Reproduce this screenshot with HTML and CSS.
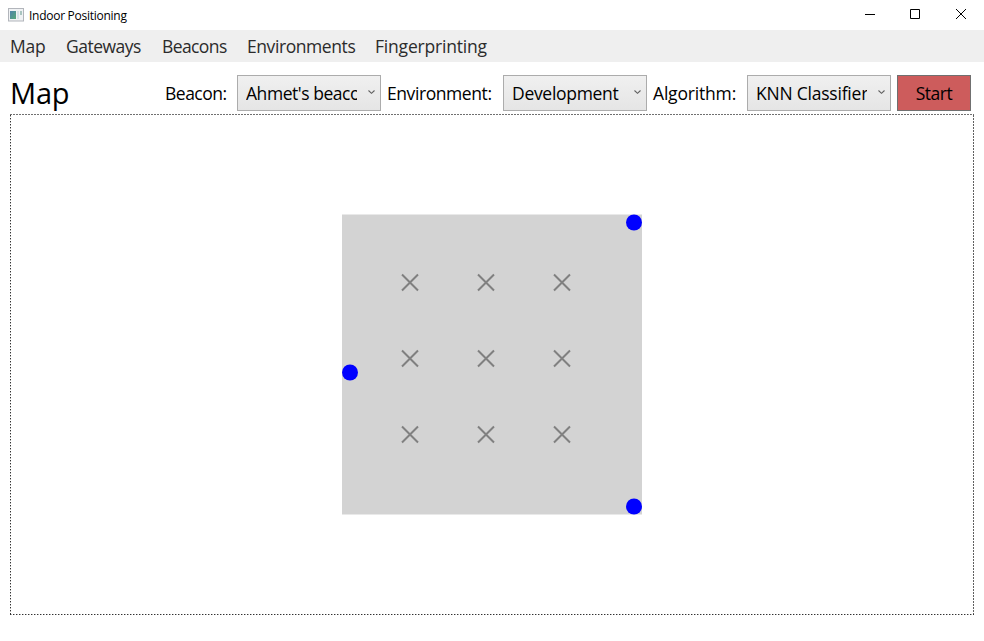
FILE: index.html
```html
<!DOCTYPE html>
<html lang="en">
<head>
<meta charset="utf-8">
<title>Indoor Positioning</title>
<link rel="stylesheet" href="styles.css">
</head>
<body>
<header class="titlebar">
  <svg class="app-icon" width="16" height="14" viewBox="0 0 16 14"><defs><linearGradient id="pane" x2="1" y2="1"><stop offset="0" stop-color="#4e83ab"/><stop offset="1" stop-color="#55a878"/></linearGradient></defs><rect x=".5" y=".5" width="15" height="12.500" fill="#f0f2f4" stroke="#b2b5bb"/><rect x="2" y="3" width="6" height="8" fill="url(#pane)"/><rect x="9" y="3" width="2" height="8" fill="#d5e2e6"/><rect x="12" y="3" width="2" height="4" fill="#a9c4bf"/></svg>
  <span class="app-title">Indoor Positioning</span>
  <svg class="controls" width="110" height="30" viewBox="0 0 110 30" fill="none" stroke="#000"><path d="M5 14.500h10M50.500 9.500h9v9h-9zM96 9l10 10M106 9l-10 10"/></svg>
</header>
<nav class="menu"><a class="m-map">Map</a><a class="m-gate">Gateways</a><a class="m-beac">Beacons</a><a class="m-env">Environments</a><a class="m-fing">Fingerprinting</a></nav>
<main class="page">
  <div class="toolbar">
    <h1>Map</h1>
    <span class="label l-beacon">Beacon:</span>
    <div class="combo c-beacon"><span>Ahmet's beacon</span><svg width="7" height="5" viewBox="0 0 7 5"><path d="M.5 .5L3.500 3.300L6.500 .5"/></svg></div>
    <span class="label l-env">Environment:</span>
    <div class="combo c-env"><span>Development</span><svg width="7" height="5" viewBox="0 0 7 5"><path d="M.5 .5L3.500 3.300L6.500 .5"/></svg></div>
    <span class="label l-alg">Algorithm:</span>
    <div class="combo c-alg"><span>KNN Classifier</span><svg width="7" height="5" viewBox="0 0 7 5"><path d="M.5 .5L3.500 3.300L6.500 .5"/></svg></div>
    <button class="start">Start</button>
  </div>
  <div class="canvas">
    <svg width="964" height="501" viewBox="0 0 964 501">
      <defs><path id="cross" d="M-8-8L8 8M8-8L-8 8" stroke="#808080" stroke-width="2"/></defs>
      <path d="M0 .5H964" stroke="#707070" stroke-dasharray="2 1"/>
      <path d="M963.500 1V500" stroke="#606060" stroke-dasharray="2 1"/>
      <g stroke-dasharray="1 2"><path d="M.5 1V500M0 500.500H964" stroke="#333"/><path d="M.5 2V500M1 500.500H964" stroke="#aaa"/></g>
      <rect x="332" y="100.500" width="300" height="300" fill="#d3d3d3"/>
      <use href="#cross" x="400" y="168.500"/><use href="#cross" x="476" y="168.500"/><use href="#cross" x="552" y="168.500"/>
      <use href="#cross" x="400" y="244.500"/><use href="#cross" x="476" y="244.500"/><use href="#cross" x="552" y="244.500"/>
      <use href="#cross" x="400" y="320.500"/><use href="#cross" x="476" y="320.500"/><use href="#cross" x="552" y="320.500"/>
      <g fill="#00f"><circle cx="624" cy="108.500" r="8"/><circle cx="340" cy="258.500" r="8"/><circle cx="624" cy="392.500" r="8"/></g>
    </svg>
  </div>
</main>
</body>
</html>
```
FILE: styles.css
```css
* { box-sizing: border-box; }
body { margin: 0; width: 984px; height: 641px; overflow: hidden; background: #fff; color: #000; font-family: "Open Sans", "Noto Sans", sans-serif; font-size: 18px; }
.titlebar { height: 30px; display: flex; align-items: center; padding-left: 8px; }
.app-icon { margin-right: 5px; }
.app-title { font-size: 12px; letter-spacing: -.27px; white-space: nowrap; }
.controls { margin-left: auto; margin-right: 14px; }
.menu, .label, .combo, .start { letter-spacing: -.5px; }
.menu { height: 32px; background: #efefef; color: #2b2b2b; display: flex; align-items: center; gap: 20px; padding-left: 10px; font-size: 17.5px; }
.menu a { white-space: nowrap; }
.menu .m-map { width: 36px; letter-spacing: -.2px; }
.m-gate { width: 76px; }
.menu .m-beac { width: 65px; letter-spacing: -.6px; }
.menu .m-env { width: 108px; letter-spacing: -.42px; }
.menu .m-fing { letter-spacing: -.2px; }
.page { padding: 13px 10px 0; }
.toolbar { height: 39px; display: flex; align-items: flex-start; }
h1 { margin: 0; width: 155px; font-size: 29px; font-weight: 400; line-height: 35px; letter-spacing: -.2px; }
.label { line-height: 36px; font-size: 17.5px; white-space: nowrap; }
.l-beacon { width: 72px; }
.l-env { width: 116px; letter-spacing: -.42px; }
.l-alg { width: 94px; letter-spacing: -.18px; }
.combo { width: 144px; height: 36px; margin-right: 6px; border: 1px solid #acacac; background: linear-gradient(#f0f0f0, #e5e5e5); display: flex; align-items: center; justify-content: space-between; padding: 0 5px 0 8px; font-size: 17.5px; }
.combo span { width: 111px; overflow: hidden; white-space: nowrap; }
.c-beacon { letter-spacing: -.45px; }
.c-env { letter-spacing: -.3px; }
.c-alg { letter-spacing: -.22px; }
.combo svg { fill: none; stroke: #606060; stroke-width: 1.1; margin-bottom: 1px; }
.start { width: 74px; height: 36px; border: 1px solid #707070; background: #cd5c5c; padding: 0; font-family: inherit; font-size: 17.5px; color: #000; }
.canvas svg { display: block; }
```
